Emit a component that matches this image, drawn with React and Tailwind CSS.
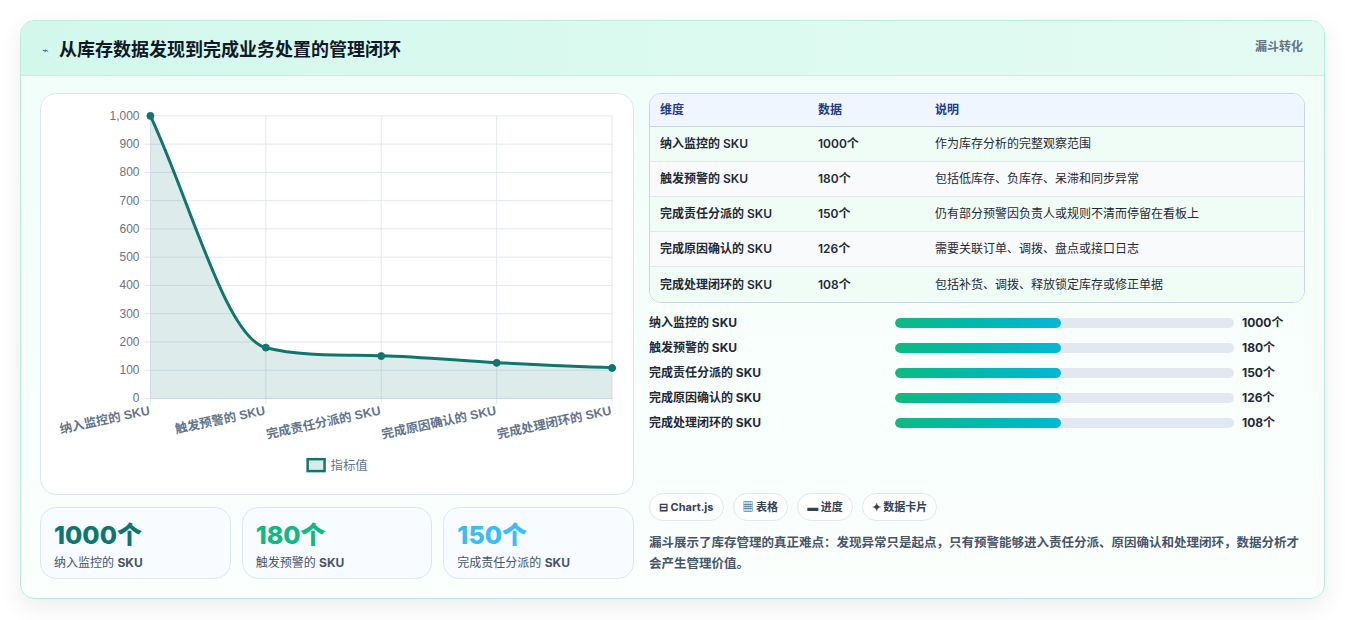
import React from "react";

const rows = [
  ["纳入监控的 SKU", "1000个", "作为库存分析的完整观察范围"],
  ["触发预警的 SKU", "180个", "包括低库存、负库存、呆滞和同步异常"],
  ["完成责任分派的 SKU", "150个", "仍有部分预警因负责人或规则不清而停留在看板上"],
  ["完成原因确认的 SKU", "126个", "需要关联订单、调拨、盘点或接口日志"],
  ["完成处理闭环的 SKU", "108个", "包括补货、调拨、释放锁定库存或修正单据"],
];

const xs = [109, 225, 341, 457, 573];
const vals = [1000, 180, 150, 126, 108];
const yOf = (v) => 306 - v * 0.284;

const Chart = () => (
  <svg viewBox="0 0 593 402" className="w-full h-full">
    {[0, 100, 200, 300, 400, 500, 600, 700, 800, 900, 1000].map((v) => (
      <g key={v}>
        <line x1="103" x2="573" y1={yOf(v)} y2={yOf(v)} stroke="#e2e8f0" />
        <text x="98" y={yOf(v) + 4} textAnchor="end" fontSize="12" fill="#6b7280" fontFamily="Liberation Sans, sans-serif">
          {v === 1000 ? "1,000" : v}
        </text>
      </g>
    ))}
    {xs.map((x) => (
      <line key={x} x1={x} x2={x} y1="22" y2="312" stroke="#e2e8f0" />
    ))}
    <path
      d="M109 22 C150 110 185 245 225 255 C262 264 300 262 341 263 C380 264 420 268 457 270 C495 272 535 274 573 275 L573 306 L109 306 Z"
      fill="#0f766e"
      fillOpacity="0.14"
    />
    <path
      d="M109 22 C150 110 185 245 225 255 C262 264 300 262 341 263 C380 264 420 268 457 270 C495 272 535 274 573 275"
      fill="none"
      stroke="#0f766e"
      strokeWidth="3"
    />
    <line x1="109" x2="573" y1="306" y2="306" stroke="#cbd5e1" />
    {xs.map((x, i) => (
      <circle key={x} cx={x} cy={yOf(vals[i])} r="3.5" fill="#0f766e" stroke="#0f766e" />
    ))}
    {rows.map((r, i) => (
      <text
        key={i}
        x={xs[i]}
        y="322"
        textAnchor="end"
        fontSize="12.5"
        fill="#64748b"
        fontWeight="bold"
        fontFamily="Liberation Sans, 'Noto Sans CJK SC', sans-serif"
        transform={`rotate(-12 ${xs[i]} 322)`}
      >
        {r[0]}
      </text>
    ))}
    <rect x="267" y="367" width="17" height="12" fill="#dbe9e8" stroke="#0f766e" strokeWidth="2.5" />
    <text x="290" y="378" fontSize="12.5" fill="#64748b" fontFamily="'Noto Sans CJK SC', sans-serif">指标值</text>
  </svg>
);

const Stat = ({ value, label, color }) => (
  <div className="flex-1 h-[72px] rounded-2xl border border-[#dbe7f3] bg-[#f8fbff] px-[13px] pt-[10px]">
    <div className={`text-[25px] leading-[34px] font-extrabold ${color}`}>{value}</div>
    <div className="text-[12px] text-[#475569] mt-[2px]">
      {label.replace(" SKU", " ")}<b>SKU</b>
    </div>
  </div>
);

export default function App() {
  return (
    <div className="w-[1345px] h-[620px] bg-white pt-[20px] pl-[20px]" style={{ fontFamily: "Inter, 'Noto Sans CJK SC', sans-serif" }}>
      <div className="w-[1305px] h-[579px] rounded-[14px] border border-[#b9ece0] bg-gradient-to-b from-[#f0fdf9] to-[#fbfffd] shadow-[0_8px_24px_rgba(15,23,42,0.08)] overflow-hidden">
        <div className="h-[55px] bg-gradient-to-r from-[#d2f8ec] to-[#e4fbf3] border-b border-[#c9efe4] flex items-start justify-between px-[21px] pt-[15px]">
          <div className="flex items-center gap-[10px]">
            <span className="text-[11px] text-[#2563eb]">⌁</span>
            <h1 className="text-[18px] font-bold text-[#111827] leading-[28px]">从库存数据发现到完成业务处置的管理闭环</h1>
          </div>
          <span className="text-[12px] font-bold text-[#64748b] mt-[2px]">漏斗转化</span>
        </div>
        <div className="flex gap-[15px] px-[19px] pt-[17px]">
          <div className="w-[594px] flex flex-col gap-[12px]">
            <div className="h-[402px] rounded-2xl border border-[#dbe7f3] bg-white">
              <Chart />
            </div>
            <div className="flex gap-[11px]">
              <Stat value="1000个" label="纳入监控的 SKU" color="text-[#0f766e]" />
              <Stat value="180个" label="触发预警的 SKU" color="text-[#10b981]" />
              <Stat value="150个" label="完成责任分派的 SKU" color="text-[#38bdf8]" />
            </div>
          </div>
          <div className="flex-1 flex flex-col">
            <div className="bg-gradient-to-b from-[#f2fdf8] to-[#fafffd] pb-[40px]">
              <div className="rounded-xl border border-[#cbd5e1] overflow-hidden bg-white">
                <div className="grid grid-cols-[158px_117px_1fr] h-[33px] items-center px-[10px] bg-[#eff6ff] border-b border-[#cbd5e1] text-[12px] font-bold text-[#1e3a8a]">
                  <span>维度</span><span>数据</span><span>说明</span>
                </div>
                {rows.map((r, i) => (
                  <div
                    key={i}
                    className={`grid grid-cols-[158px_117px_1fr] h-[35px] items-center px-[10px] text-[12px] text-[#1f2937] ${i < 4 ? "border-b border-[#e2e8f0]" : ""} ${i % 2 === 0 ? "bg-[#f0fdf6]" : "bg-[#f8fafc]"}`}
                  >
                    <span className="font-semibold">{r[0]}</span>
                    <span className="font-semibold">{r[1]}</span>
                    <span>{r[2]}</span>
                  </div>
                ))}
              </div>
              <div className="flex flex-col gap-[9px] mt-[12px]">
                {rows.map((r, i) => (
                  <div key={i} className="flex items-center h-[16px] text-[12px] font-bold text-[#1f2937]">
                    <span className="w-[246px]">{r[0]}</span>
                    <div className="w-[339px] h-[10px] rounded-full bg-[#e2e8f0] overflow-hidden">
                      <div className="w-[166px] h-full rounded-full bg-gradient-to-r from-[#10b981] to-[#06b6d4]" />
                    </div>
                    <span className="ml-[8px]">{r[1]}</span>
                  </div>
                ))}
              </div>
            </div>
            <div className="flex gap-[9px] mt-[22px]">
              {["⊟ Chart.js", "▦ 表格", "▬ 进度", "✦ 数据卡片"].map((c) => (
                <span key={c} className="h-[28px] px-[9px] rounded-full border border-[#e2e8f0] bg-white text-[11px] font-bold text-[#334155] flex items-center">
                  {c}
                </span>
              ))}
            </div>
            <p className="mt-[11px] text-[12.5px] leading-[21px] font-semibold text-[#475569]">
              漏斗展示了库存管理的真正难点：发现异常只是起点，只有预警能够进入责任分派、原因确认和处理闭环，数据分析才会产生管理价值。
            </p>
          </div>
        </div>
      </div>
    </div>
  );
}
